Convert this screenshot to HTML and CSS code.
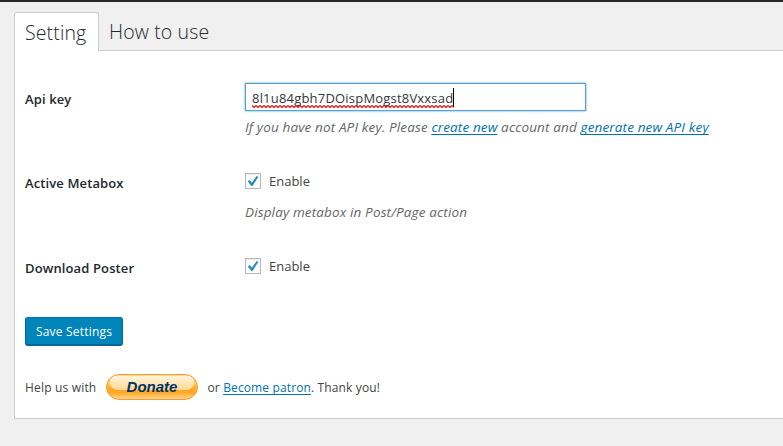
FILE: index.html
```html
<!DOCTYPE html>
<html lang="en">
<head>
<meta charset="utf-8">
<title>Settings</title>
<link rel="stylesheet" href="styles.css">
</head>
<body>
<div class="topbar"></div>
<main class="wrap">
  <nav class="tabs">
    <a class="tab active"><span class="t-setting">Setting</span></a>
    <a class="tab"><span class="t-how">How to use</span></a>
  </nav>
  <section class="panel">
    <div class="row row-key">
      <div class="label l-api">Api key</div>
      <div class="field">
        <div class="input"><span class="value">8l1u84gbh7DOispMogst8Vxxsad<svg class="squiggle" width="202" height="3"><defs><pattern id="w" width="4" height="3" patternUnits="userSpaceOnUse"><path d="M0 .5 2 2.5 4 .5" fill="none" stroke="#f00" stroke-width="1.1"/></pattern></defs><rect width="202" height="3" fill="url(#w)"/></svg></span><i class="caret"></i></div>
        <p class="desc d-key">If you have not API key. Please <a>create new</a> account and <a>generate new API key</a></p>
      </div>
    </div>
    <div class="row row-meta">
      <div class="label l-meta">Active Metabox</div>
      <div class="field">
        <div class="check"><span class="box"><svg width="14" height="14" viewBox="0 0 14 14"><path d="M1.8 7.2 3.8 6l2 2.8L10.7 2l1.6.9-5.9 9H5.2z" fill="#1e8cbe"/></svg></span><span class="enable">Enable</span></div>
        <p class="desc d-meta">Display metabox in Post/Page action</p>
      </div>
    </div>
    <div class="row row-poster">
      <div class="label l-poster">Download Poster</div>
      <div class="field">
        <div class="check"><span class="box"><svg width="14" height="14" viewBox="0 0 14 14"><path d="M1.8 7.2 3.8 6l2 2.8L10.7 2l1.6.9-5.9 9H5.2z" fill="#1e8cbe"/></svg></span><span class="enable">Enable</span></div>
      </div>
    </div>
    <button class="save"><span>Save Settings</span></button>
    <div class="help">
      <span class="h1">Help us with</span>
      <span class="donate"><span>Donate</span></span>
      <span class="h2">or <a>Become patron</a>. Thank you!</span>
    </div>
  </section>
</main>
</body>
</html>
```
FILE: styles.css
```css
* { box-sizing: border-box; }
body {
  margin: 0;
  height: 446px;
  overflow: hidden;
  background: #f0f0f0;
  font: 13px/20px "Open Sans", "Noto Sans", sans-serif;
  color: #444;
}
p { margin: 0; }
a { color: #0073aa; }
.desc a, .help a { text-decoration: underline; text-underline-offset: 2px; text-decoration-thickness: 1px; text-decoration-skip-ink: none; }
.topbar { height: 2px; background: #23282d; }
.wrap { padding: 10px 0 0 14px; }
.tabs { display: flex; height: 38px; }
.tab {
  padding: 6px 10px 0;
  height: 38px;
  font-size: 19.5px;
  line-height: 28px;
  font-weight: 300;
  letter-spacing: .13px;
  color: #23282d;
  white-space: nowrap;
}
.tab.active {
  position: relative;
  width: 85px;
  height: 39px;
  background: #fff;
  border: 1px solid #ccc;
  border-bottom: 0;
  border-radius: 3px 3px 0 0;
}
.panel {
  width: 800px;
  height: 369px;
  padding: 32px 10px 0;
  background: #fff;
  border: 1px solid #ccc;
}
.row { display: grid; grid-template-columns: 220px 1fr; white-space: nowrap; }
.row-key { height: 88px; }
.row-meta { height: 85px; }
.row-poster { height: 61px; }
.label { font-weight: 600; letter-spacing: .12px; color: #23282d; padding-top: 6px; }
.row-meta .label, .row-poster .label { padding-top: 2px; }
.input {
  display: flex;
  align-items: center;
  width: 341px;
  height: 28px;
  padding: 1px 0 0 6px;
  border: 1px solid #5b9dd9;
  box-shadow: 0 0 2px rgba(30, 140, 190, .8);
  color: #32373c;
}
.value { position: relative; letter-spacing: .2px; }
.squiggle { position: absolute; left: 0; top: 17px; }
.caret { width: 1px; height: 19px; background: #000; }
.desc { font-size: 13.5px; font-style: italic; letter-spacing: .14px; color: #666; }
.d-key { margin-top: 6px; }
.check { display: flex; align-items: center; height: 20px; }
.d-meta { margin-top: 11px; }
.box {
  width: 16px;
  height: 16px;
  margin-right: 8px;
  border: 1px solid #b4b9be;
  box-shadow: inset 0 1px 2px rgba(0, 0, 0, .1);
}
.box svg { display: block; }
.save {
  display: block;
  width: 98px;
  height: 29px;
  padding: 1px 0 0;
  border: 1px solid;
  border-color: #0073aa #006799 #006799;
  border-bottom-width: 2px;
  border-radius: 3px;
  background: #0085ba;
  color: #fff;
  font: 12px/25px "Open Sans", "Noto Sans", sans-serif;
  letter-spacing: .2px;
  white-space: nowrap;
}
.help { display: flex; align-items: center; height: 26px; margin-top: 28px; white-space: nowrap; font-size: 12px; }
.h1 { width: 81px; letter-spacing: .18px; padding-top: 2px; }
.h2 { letter-spacing: .13px; padding-top: 2px; }
.donate {
  position: relative;
  width: 92px;
  height: 26px;
  margin-right: 9.5px;
  border: 1px solid #ff9933;
  border-radius: 13px;
  background: linear-gradient(#ffdb95 0%, #ffc96a 35%, #ffa922 60%, #ffa822 72%, #ffd68e 100%);
  color: #003366;
  font: italic bold 15px/23px "Liberation Sans", Arial, sans-serif;
  text-align: center;
}
.donate::before {
  content: "";
  position: absolute;
  left: 3px;
  right: 3px;
  top: 1px;
  height: 14px;
  border-radius: 9px 9px 12px 12px;
  background: linear-gradient(#fff4dc, #ffd893);
}
.donate span { position: relative; }
```
